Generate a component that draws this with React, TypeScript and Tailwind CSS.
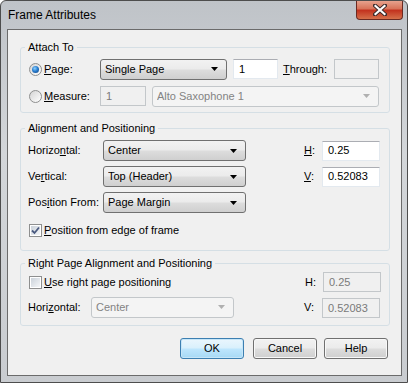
import type { ReactNode } from 'react'

const btnGrad =
  'bg-[linear-gradient(#f2f2f2_0%,#ebebeb_48%,#dddddd_52%,#cfcfcf_100%)]'

function Radio({ checked }: { checked?: boolean }) {
  return (
    <span className="w-[13px] h-[13px] shrink-0 rounded-full border border-[#8e8f8f] bg-[linear-gradient(135deg,#d4d4d4,#ffffff)] flex items-center justify-center">
      {checked && (
        <span className="w-[7px] h-[7px] rounded-full bg-[radial-gradient(circle_at_40%_35%,#8fd2ff_0%,#2a7fd0_45%,#0b3a7a_100%)]" />
      )}
    </span>
  )
}

function Check({ checked }: { checked?: boolean }) {
  return (
    <span className="w-[13px] h-[13px] shrink-0 border border-[#8e8f8f] bg-white p-[1px] flex">
      <span className="flex-1 bg-[linear-gradient(135deg,#cbd2da,#f4f6f8)] flex items-center justify-center">
        {checked && (
          <svg width="9" height="9" viewBox="0 0 9 9">
            <path d="M1 4.5 L3.5 7 L8 1.5" fill="none" stroke="#4a5a80" strokeWidth="1.8" />
          </svg>
        )}
      </span>
    </span>
  )
}

function Select({ value, w, disabled }: { value: string; w: string; disabled?: boolean }) {
  return (
    <div
      className={`${w} h-[21px] rounded-[3px] border flex items-center pl-[4px] pr-[8px] ${
        disabled
          ? 'border-[#c3c7ca] bg-[#f4f4f4] text-[#838383]'
          : `border-[#707070] ${btnGrad} text-black`
      }`}
    >
      <span className="flex-1 truncate">{value}</span>
      <svg width="7" height="4" viewBox="0 0 7 4">
        <path d="M0 0 H7 L3.5 4 Z" fill={disabled ? '#b0b0b0' : '#000'} />
      </svg>
    </div>
  )
}

function Field({ value, w, disabled }: { value: string; w: string; disabled?: boolean }) {
  return (
    <div
      className={`${w} h-[20px] border flex items-center pl-[5px] ${
        disabled
          ? 'border-[#c3c7ca] bg-[#f0f0f0] text-[#7a7a7a]'
          : 'border-[#e3e9ef] border-t-[#abadb3] bg-white text-black'
      }`}
    >
      {value}
    </div>
  )
}

function Button({ children, ok, className }: { children: ReactNode; ok?: boolean; className?: string }) {
  return (
    <div
      className={`w-[64px] h-[21px] rounded-[3px] border flex items-center justify-center ${
        ok
          ? 'border-[#3c7fb1] bg-[linear-gradient(#eaf6fd_0%,#d9f0fc_48%,#bee6fd_52%,#a7d9f5_100%)] shadow-[inset_0_0_0_1px_#c7e6f8]'
          : `border-[#707070] ${btnGrad} shadow-[inset_0_0_0_1px_#f8f8f8]`
      } ${className ?? ''}`}
    >
      {children}
    </div>
  )
}

export default function App() {
  return (
    <div className="w-[408px] h-[383px] relative rounded-t-[6px] border border-[#4d4d4d] bg-[linear-gradient(#bfc3c8,#d3d6d9_40%,#c9ccd0)] font-['Liberation_Sans',Arial,sans-serif] text-[11px] leading-[13px] text-black overflow-hidden">
      {/* Title bar */}
      <div className="h-[28px] pl-[7px] pt-[7px] text-[12px] leading-[15px]">Frame Attributes</div>
      <div className="absolute top-[-1px] right-[4px] w-[47px] h-[20px] rounded-b-[4px] border border-[#6b2a22] border-t-0 bg-[linear-gradient(#e9a894_0%,#d8745a_45%,#c3331f_55%,#d5704a_100%)] flex items-center justify-center">
        <svg width="14" height="12" viewBox="0 0 14 12">
          <path d="M2 1.5 L12 10.5 M12 1.5 L2 10.5" stroke="#3a2a2a" strokeWidth="4" strokeLinecap="square" />
          <path d="M2.5 2 L11.5 10 M11.5 2 L2.5 10" stroke="#fff" strokeWidth="2.2" strokeLinecap="square" />
        </svg>
      </div>

      {/* Client area */}
      <div className="ml-[6px] w-[395px] h-[347px] border border-[#6b6b6b] bg-[#f0f0f0] pl-[12px] flex flex-col">
        {/* Attach To */}
        <fieldset className="mt-[11px] w-[370px] rounded-[3px] border border-[#d5dfe5] pl-[8px] pb-[6px]">
          <legend className="ml-[-4px] px-[3px]">Attach To</legend>
          <div className="mt-[5px] h-[20px] flex items-center">
            <div className="w-[71px] flex items-center gap-[2px]">
              <Radio checked />
              <span>
                <u>P</u>age:
              </span>
            </div>
            <Select value="Single Page" w="w-[127px]" />
            <div className="ml-[6px]">
              <Field value="1" w="w-[45px]" />
            </div>
            <span className="ml-[5px] w-[51px]">
              <u>T</u>hrough:
            </span>
            <Field value="" w="w-[45px]" disabled />
          </div>
          <div className="mt-[7px] h-[20px] flex items-center">
            <div className="w-[71px] flex items-center gap-[2px]">
              <Radio />
              <span>
                <u>M</u>easure:
              </span>
            </div>
            <Field value="1" w="w-[46px]" disabled />
            <div className="ml-[6px]">
              <Select value="Alto Saxophone 1" w="w-[227px]" disabled />
            </div>
          </div>
        </fieldset>

        {/* Alignment and Positioning */}
        <fieldset className="mt-[9px] w-[370px] rounded-[3px] border border-[#d5dfe5] pl-[7px] pb-[13px]">
          <legend className="ml-[-3px] px-[3px]">Alignment and Positioning</legend>
          <div className="mt-[5px] h-[21px] flex items-center">
            <span className="w-[75px]">
              Horizo<u>n</u>tal:
            </span>
            <Select value="Center" w="w-[143px]" />
            <span className="ml-[58px] w-[18px]">
              <u>H</u>:
            </span>
            <Field value="0.25" w="w-[58px]" />
          </div>
          <div className="mt-[5px] h-[21px] flex items-center">
            <span className="w-[75px]">
              Ve<u>r</u>tical:
            </span>
            <Select value="Top (Header)" w="w-[143px]" />
            <span className="ml-[58px] w-[18px]">
              <u>V</u>:
            </span>
            <Field value="0.52083" w="w-[58px]" />
          </div>
          <div className="mt-[5px] h-[21px] flex items-center">
            <span className="w-[75px]">
              Pos<u>i</u>tion From:
            </span>
            <Select value="Page Margin" w="w-[143px]" />
          </div>
          <div className="mt-[11px] ml-[1px] flex items-center gap-[2px]">
            <Check checked />
            <span>
              <u>P</u>osition from edge of frame
            </span>
          </div>
        </fieldset>

        {/* Right Page Alignment and Positioning */}
        <fieldset className="mt-[6px] w-[370px] rounded-[3px] border border-[#d5dfe5] pl-[7px] pb-[7px]">
          <legend className="ml-[-3px] px-[3px]">Right Page Alignment and Positioning</legend>
          <div className="mt-[2px] h-[20px] flex items-center">
            <div className="w-[276px] ml-[1px] flex items-center gap-[2px]">
              <Check />
              <span>
                <u>U</u>se right page positioning
              </span>
            </div>
            <span className="w-[18px]">H:</span>
            <Field value="0.25" w="w-[58px]" disabled />
          </div>
          <div className="mt-[4px] h-[22px] flex items-center">
            <span className="w-[63px]">
              Hori<u>z</u>ontal:
            </span>
            <Select value="Center" w="w-[143px]" disabled />
            <span className="ml-[70px] w-[18px] self-end mb-[4px]">V:</span>
            <div className="self-end">
              <Field value="0.52083" w="w-[58px]" disabled />
            </div>
          </div>
        </fieldset>

        {/* Buttons */}
        <div className="mt-[12px] w-[370px] flex justify-end">
          <Button ok>OK</Button>
          <Button className="ml-[9px]">Cancel</Button>
          <Button className="ml-[7px] mr-[2px]">Help</Button>
        </div>
      </div>
    </div>
  )
}
